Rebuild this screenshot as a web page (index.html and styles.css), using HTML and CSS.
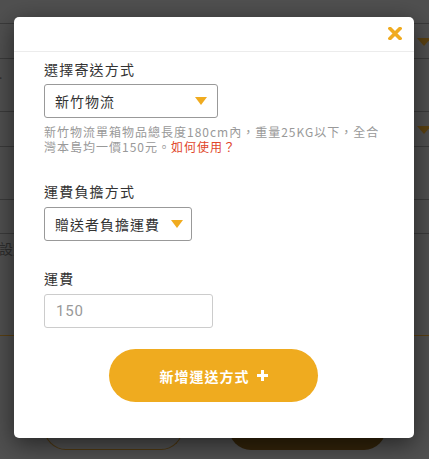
FILE: index.html
```html
<!DOCTYPE html>
<html lang="zh-Hant">
<head>
<meta charset="utf-8">
<link rel="stylesheet" href="styles.css">
</head>
<body>
<div class="page">
  <div class="row r1"></div>
  <div class="row r2"><span class="tri"></span></div>
  <div class="row r3"><span class="dot">.</span></div>
  <div class="row r4"><span class="tri"></span></div>
  <div class="row r5"></div>
  <div class="row r6"></div>
  <div class="row r7"><span class="bgtext">設定</span></div>
  <div class="bottom">
    <span class="bgbtn outline"></span>
    <span class="bgbtn filled"></span>
  </div>
</div>

<div class="modal">
  <div class="modal-head">
    <svg class="close" width="14" height="13" viewBox="0 0 14 13"><path d="M2 1.5 L12 11.5 M12 1.5 L2 11.5" stroke="#f0ab1f" stroke-width="3.6" stroke-linecap="square"/></svg>
  </div>
  <div class="modal-body">
    <div class="label">選擇寄送方式</div>
    <div class="select sel1"><span>新竹物流</span><i class="caret"></i></div>
    <p class="help">新竹物流單箱物品總長度180cm內，重量25KG以下，全合灣本島均一價150元。<a class="link">如何使用？</a></p>

    <div class="label sec">運費負擔方式</div>
    <div class="select sel2"><span>贈送者負擔運費</span><i class="caret"></i></div>

    <div class="label sec">運費</div>
    <div class="input">150</div>

    <div class="btn-wrap">
      <button class="btn">新增運送方式<svg class="plus" width="11" height="11" viewBox="0 0 11 11"><path d="M5.5 0 V11 M0 5.5 H11" stroke="#fff" stroke-width="3"/></svg></button>
    </div>
  </div>
</div>
</body>
</html>
```
FILE: styles.css
```css
html, body {
  margin: 0;
  padding: 0;
}
body {
  width: 429px;
  height: 459px;
  overflow: hidden;
  background: #505050;
  font-family: "Noto Sans CJK TC", "Noto Sans", sans-serif;
  position: relative;
}
.page {
  display: flex;
  flex-direction: column;
}
.row {
  border-bottom: 1px solid #3b3b3b;
  position: relative;
}
.r1 { height: 23px; }
.r2 { height: 34px; }
.r3 { height: 52px; }
.r4 { height: 34px; }
.r5 { height: 52px; }
.r6 { height: 33px; }
.r7 {
  height: 101px;
  border-bottom: 1px solid #5a4013;
}
.tri {
  position: absolute;
  right: -2px;
  top: 14px;
  width: 0;
  height: 0;
  border-left: 7px solid transparent;
  border-right: 7px solid transparent;
  border-top: 8px solid #5a4112;
}
.dot {
  display: block;
  font-size: 12px;
  color: #2e2e2e;
  margin: 6px 0 0 -1px;
}
.bgtext {
  display: block;
  margin: 4px 0 0 -1px;
  font-size: 14px;
  color: #2e2e2e;
}
.bottom {
  display: flex;
  padding: 0 0 0 44px;
  gap: 46px;
  margin-top: 71px;
}
.bgbtn {
  display: block;
  height: 43px;
  border-radius: 0 0 22px 22px;
}
.outline {
  width: 139px;
  border: 1px solid #4e3811;
  border-top: none;
  box-sizing: border-box;
}
.filled {
  width: 157px;
  background: #33240a;
}

.modal {
  position: absolute;
  left: 14px;
  top: 17px;
  width: 400px;
  height: 421px;
  background: #fff;
  border-radius: 5px;
  box-shadow: 0 6px 24px rgba(0, 0, 0, 0.55);
  display: flex;
  flex-direction: column;
}
.modal-head {
  height: 34px;
  border-bottom: 1px solid #ececec;
  display: flex;
  align-items: center;
  justify-content: flex-end;
  padding-right: 12px;
}
.close { display: block; margin-top: -1px; }
.modal-body {
  padding: 7px 30px 0 30px;
  display: flex;
  flex-direction: column;
  align-items: flex-start;
}
.label {
  font-size: 14px;
  line-height: 20px;
  letter-spacing: 1.2px;
  color: #333;
  margin-bottom: 5px;
}
.label.sec { margin-top: 27px; margin-bottom: 6px; }
.select {
  box-sizing: border-box;
  height: 34px;
  border: 1px solid #999;
  border-radius: 3px;
  display: flex;
  align-items: center;
  justify-content: space-between;
  padding: 0 10px 0 10px;
  font-size: 14px;
  letter-spacing: 1px;
  color: #333;
}
.sel1 { width: 174px; }
.sel2 { gap: 11px; padding-right: 8px; }
.caret {
  display: block;
  width: 0;
  height: 0;
  border-left: 6px solid transparent;
  border-right: 6px solid transparent;
  border-top: 8px solid #f0ab1f;
}
.help {
  margin: 7px 0 0 0;
  font-size: 12px;
  line-height: 14.5px;
  letter-spacing: 1px;
  color: #999;
  width: 340px;
}
.link { color: #e0462b; }
.input {
  box-sizing: border-box;
  width: 169px;
  height: 34px;
  border: 1px solid #ccc;
  border-radius: 3px;
  display: flex;
  align-items: center;
  padding-left: 11px;
  font-family: "Roboto", "Noto Sans", sans-serif;
  font-size: 15px;
  color: #999;
  letter-spacing: 0.8px;
}
.btn-wrap {
  align-self: stretch;
  display: flex;
  justify-content: center;
  margin-top: 21px;
  padding-right: 1px;
}
.btn {
  width: 209px;
  height: 53px;
  border: none;
  border-radius: 27px;
  background: #efab1f;
  color: #fff;
  font-family: "Noto Sans CJK TC", "Noto Sans", sans-serif;
  font-size: 14px;
  font-weight: 700;
  letter-spacing: 1px;
  display: flex;
  align-items: center;
  justify-content: center;
  gap: 7px;
  padding: 0;
}
.plus { display: block; }
```
